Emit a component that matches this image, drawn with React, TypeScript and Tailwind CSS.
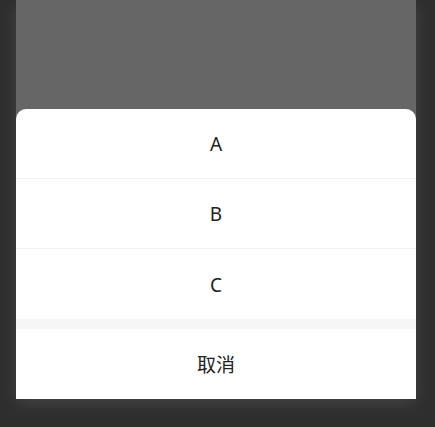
export default function App() {
  const options = ['A', 'B', 'C'];

  return (
    <div className="h-[427px] w-full overflow-hidden bg-[#2e2e2e] pl-4 font-['Noto_Sans','Noto_Sans_CJK_SC',sans-serif]">
      <div className="flex h-[399px] w-[400px] flex-col justify-end bg-[#666666] shadow-[0_5px_16px_rgba(255,255,255,0.1)]">
        {/* action sheet */}
        <div className="overflow-hidden rounded-t-[10px] bg-white text-[19px] text-[#222]">
          {options.map((label, i) => (
            <div
              key={label}
              className={
                i < options.length - 1
                  ? 'flex h-[70px] items-center justify-center border-b border-[#f2f2f2] pt-[2px]'
                  : 'flex h-[70px] items-center justify-center pt-[2px]'
              }
            >
              {label}
            </div>
          ))}
          <div className="h-[10px] bg-[#f6f6f6]" />
          <div className="flex h-[70px] items-center justify-center pt-[2px]">取消</div>
        </div>
      </div>
    </div>
  );
}
